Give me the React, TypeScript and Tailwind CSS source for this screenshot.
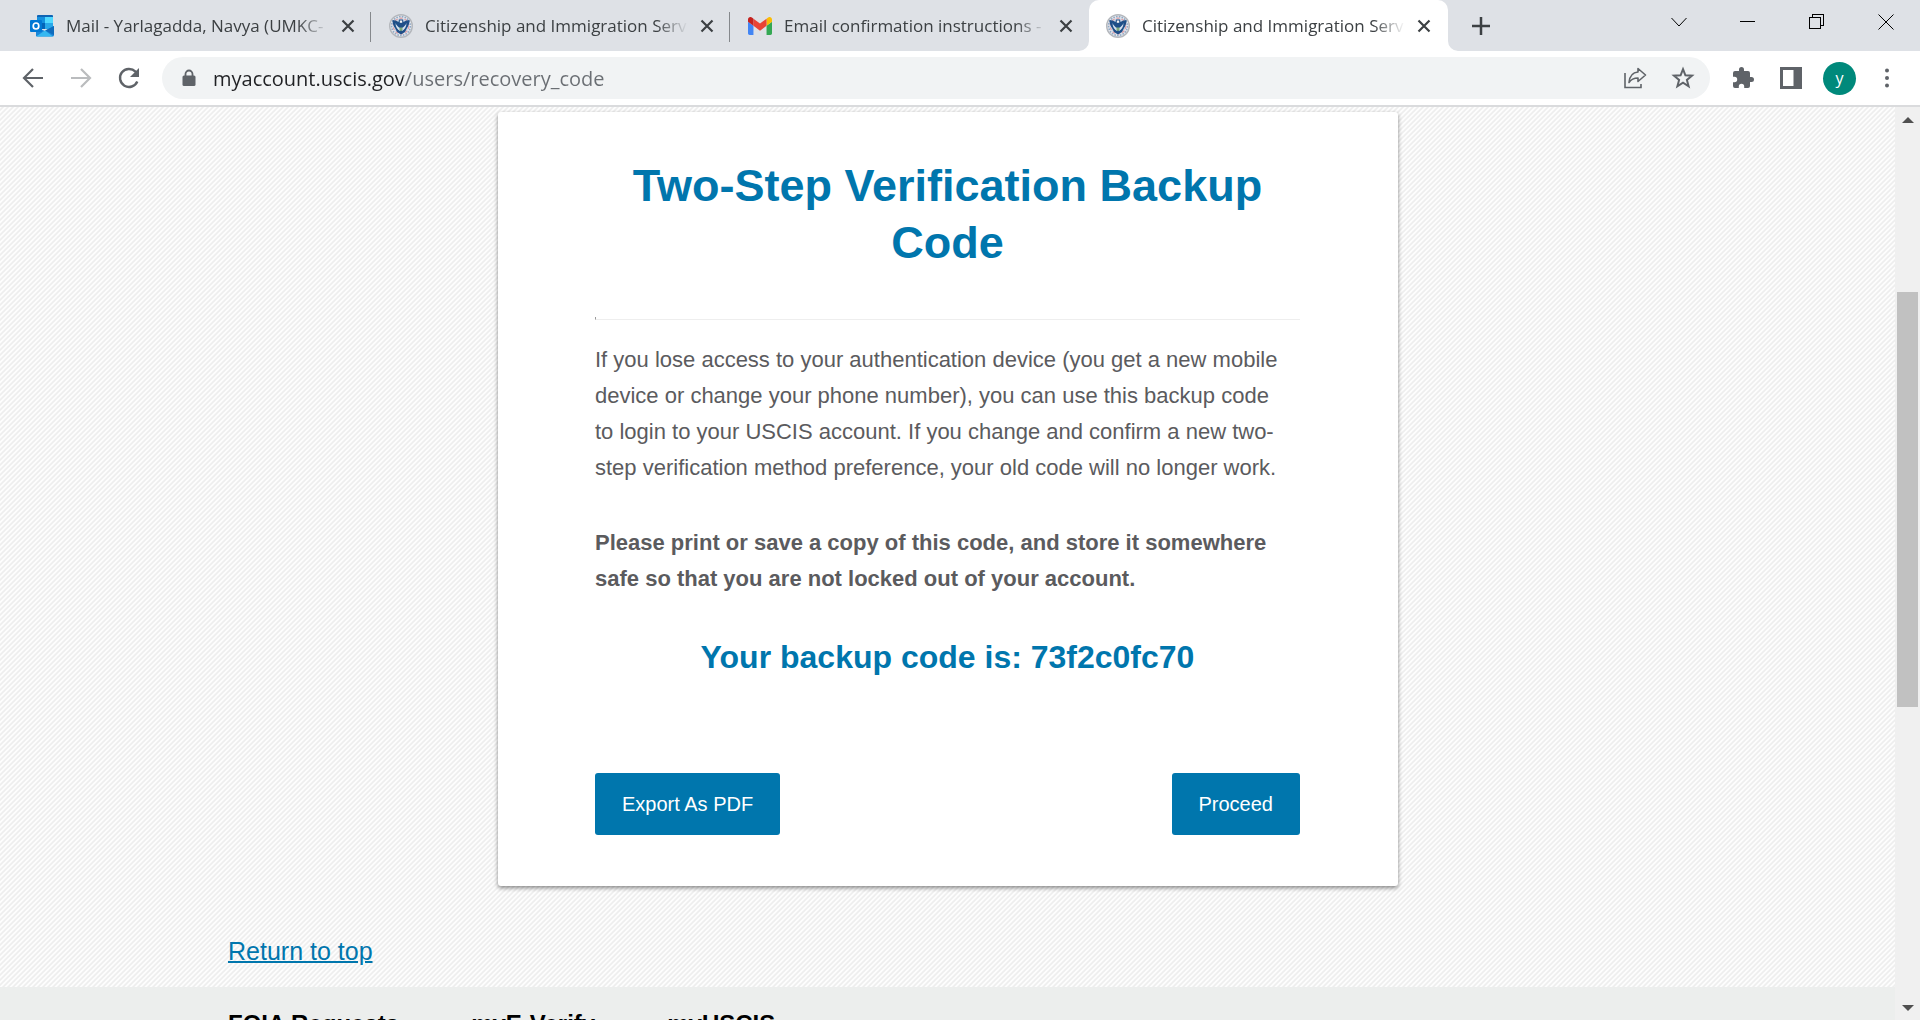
import type { ReactNode } from 'react';

function OutlookIcon() {
  return (
    <svg viewBox="0 0 24 22" className="h-[22px] w-6 shrink-0" aria-hidden="true">
      <rect x="7" y="0" width="16" height="14" rx="1" fill="#0f64b4" />
      <rect x="7" y="2" width="8" height="6" fill="#1490df" />
      <rect x="15" y="2" width="8" height="6" fill="#50d9ff" />
      <rect x="7" y="8" width="8" height="6" fill="#0364b8" />
      <rect x="15" y="8" width="8" height="6" fill="#28a8ea" />
      <path d="M6 21V12l9 4 9-5v9a1.500 1.500 0 0 1-1.500 1.500H7z" fill="#1a86d8" />
      <path d="M24 11v9l-9-4.500z" fill="#0f6cbd" />
      <path d="M6 21.500 15 15.500l8 6z" fill="#35b8f1" />
      <rect x="0" y="5" width="12" height="12" rx="1" fill="#0078d4" />
      <ellipse cx="6" cy="11" rx="2.800" ry="3" fill="none" stroke="#fff" strokeWidth="1.700" />
    </svg>
  );
}

function SealIcon() {
  return (
    <svg viewBox="0 0 24 24" className="h-6 w-6 shrink-0" aria-hidden="true">
      <circle cx="12" cy="12" r="11.300" fill="#e6e8ec" stroke="#b4b7bc" strokeWidth="1.400" />
      <circle cx="12" cy="12" r="9.400" fill="none" stroke="#8fa9c6" strokeWidth="1.600" strokeDasharray="1.600 1.200" />
      <circle cx="12" cy="12" r="7.800" fill="#c9d7e6" stroke="#e0a0a6" strokeWidth="1.200" strokeDasharray="3 2" />
      <path d="M3.500 6c2.300 0 4.300.8 6 2L10 5.500h4l.5 2.500c1.700-1.200 3.700-2 6-2 0 3.500-1 6-2.500 8l-2 4-4 2.500L8 18l-2-4C4.500 12 3.500 9.500 3.500 6z" fill="#1f4f88" />
      <path d="M6.500 9c1 2.500 2.800 4 4.500 5v3c-2.500-1.200-4.500-4-4.500-8zM17.500 9c-1 2.500-2.800 4-4.500 5v3c2.500-1.200 4.500-4 4.500-8z" fill="#d5e2ef" />
      <path d="M10.800 6.500h2.400v2.300h-2.400z" fill="#f4f4f4" />
      <path d="M10.500 13.500h3v2.500L12 17.300 10.500 16z" fill="#7fa97c" />
    </svg>
  );
}

function GmailIcon() {
  return (
    <svg viewBox="52 42 88 66" className="h-[18px] w-6 shrink-0" aria-hidden="true">
      <path fill="#4285f4" d="M58 108h14V74L52 59v43c0 3.320 2.690 6 6 6" />
      <path fill="#34a853" d="M120 108h14c3.320 0 6-2.690 6-6V59l-20 15" />
      <path fill="#fbbc04" d="M120 48v26l20-15v-8c0-7.420-8.470-11.650-14.400-7.200" />
      <path fill="#ea4335" d="M72 74V48l24 18 24-18v26L96 92" />
      <path fill="#c5221f" d="M52 51v8l20 15V48l-5.600-4.200c-5.940-4.450-14.400-.22-14.400 7.200" />
    </svg>
  );
}

function Tab({ icon, title, active, divider }: { icon: ReactNode; title: string; active?: boolean; divider?: boolean }) {
  return (
    <div className={active ? 'relative flex max-w-[359px] flex-1 items-center rounded-t-[10px] bg-white pr-[17px] pl-[17px]' : 'relative flex max-w-[359px] flex-1 items-center pr-4 pl-[18px]'}>
      {active && (
        <>
          <svg viewBox="0 0 10 10" className="absolute bottom-0 -left-[10px] size-[10px]" aria-hidden="true">
            <path d="M10 0v10H0A10 10 0 0 0 10 0z" fill="#fff" />
          </svg>
          <svg viewBox="0 0 10 10" className="absolute -right-[10px] bottom-0 size-[10px]" aria-hidden="true">
            <path d="M0 0v10h10A10 10 0 0 1 0 0z" fill="#fff" />
          </svg>
        </>
      )}
      {icon}
      <span className="ml-3 min-w-0 flex-1 mask-r-from-[calc(100%-32px)] text-[17px] leading-6 whitespace-nowrap text-[#3c4043]">
        {title}
      </span>
      <button aria-label="Close tab" className="ml-3 text-[#3c4043]">
        <svg viewBox="0 0 14 14" className="size-[14px]" fill="none" stroke="currentColor" strokeWidth="2.200">
          <path d="M1.500 1.500l11 11M12.500 1.500l-11 11" />
        </svg>
      </button>
      {divider && <span className="absolute top-3 right-0 h-[30px] w-px bg-[#85888c]" />}
    </div>
  );
}

function TabStrip() {
  return (
    <div className="flex h-[51px] shrink-0 bg-[#dee1e6] pl-3">
      <div className="flex min-w-0 flex-1">
        <Tab icon={<OutlookIcon />} title="Mail - Yarlagadda, Navya (UMKC-" divider />
        <Tab icon={<SealIcon />} title="Citizenship and Immigration Serv" divider />
        <Tab icon={<GmailIcon />} title="Email confirmation instructions -" />
        <Tab icon={<SealIcon />} title="Citizenship and Immigration Serv" active />
        <button aria-label="New tab" className="ml-6 self-center text-[#3c4043]">
          <svg viewBox="0 0 18 18" className="size-[18px]" fill="none" stroke="currentColor" strokeWidth="2.500">
            <path d="M9 0v18M0 9h18" />
          </svg>
        </button>
      </div>
      <div className="flex h-[43px] items-center gap-[53px] pr-[26px] text-black">
        <button aria-label="Search tabs">
          <svg viewBox="0 0 16 16" className="size-4" fill="none" stroke="currentColor" strokeWidth="1">
            <path d="M.5 4 8 12 15.500 4" />
          </svg>
        </button>
        <button aria-label="Minimize">
          <svg viewBox="0 0 16 16" className="size-4" stroke="currentColor" shapeRendering="crispEdges">
            <path d="M0 7.500h15" />
          </svg>
        </button>
        <button aria-label="Restore">
          <svg viewBox="0 0 16 16" className="size-4" fill="none" stroke="currentColor" shapeRendering="crispEdges">
            <path d="M.5 3.500h11v11H.5zM3.500 3.500v-3h11v11h-3" />
          </svg>
        </button>
        <button aria-label="Close window">
          <svg viewBox="0 0 16 16" className="size-4" fill="none" stroke="currentColor" strokeWidth="1">
            <path d="M.5.5l15 15M15.500.5l-15 15" />
          </svg>
        </button>
      </div>
    </div>
  );
}

function Toolbar() {
  return (
    <div className="flex h-14 shrink-0 items-center border-b-2 border-[#dadbdd] bg-white pr-[31px] pl-[21px] text-[#5f6368]">
      <button aria-label="Back">
        <svg viewBox="0 0 24 24" className="size-6" fill="none" stroke="currentColor" strokeWidth="2.200">
          <path d="M22 12H3.500M12 3 3 12l9 9" />
        </svg>
      </button>
      <button aria-label="Forward" className="ml-6 text-[#babcbe]">
        <svg viewBox="0 0 24 24" className="size-6" fill="none" stroke="currentColor" strokeWidth="2.200">
          <path d="M2 12h18.500M12 3l9 9-9 9" />
        </svg>
      </button>
      <button aria-label="Reload" className="ml-6">
        <svg viewBox="0 0 24 24" className="size-6" fill="none" stroke="currentColor" strokeWidth="2.400">
          <path d="M20.300 15.500A9 9 0 1 1 18.500 5.700L21 8" />
          <path d="M22 2v9h-9z" fill="currentColor" stroke="none" />
        </svg>
      </button>
      <div className="ml-[21px] flex h-[42px] flex-1 items-center rounded-full bg-[#f1f3f4] pr-[15px] pl-5">
        <svg viewBox="0 0 14 18" className="h-[18px] w-[14px]" aria-hidden="true">
          <path d="M3.500 7V5a3.500 3.500 0 0 1 7 0v2" fill="none" stroke="#5f6368" strokeWidth="1.800" />
          <rect x=".5" y="6.500" width="13" height="10.500" rx="1.500" fill="#5f6368" />
        </svg>
        <input
          aria-label="Address and search bar"
          defaultValue="myaccount.uscis.gov/users/recovery_code"
          className="ml-[17px] min-w-0 flex-1 bg-linear-[90deg,#202124_190px,#6a6e73_190px] bg-clip-text pt-0.5 text-[20px] leading-7 text-transparent outline-none"
        />
        <button aria-label="Share this page">
          <svg viewBox="0 0 24 24" className="size-6" fill="none" stroke="currentColor" strokeWidth="1.600">
            <path d="M2 7v14.500h16V18" />
            <path d="M15 2.500 22.500 9 15 15.500V12c-4 0-7 1.500-9 4.500C6.500 11 9.500 6.500 15 6z" strokeLinejoin="round" />
          </svg>
        </button>
        <button aria-label="Bookmark this tab" className="ml-6">
          <svg viewBox="0 0 24 24" className="size-6" fill="none" stroke="currentColor" strokeWidth="2">
            <path d="M12 3.200l2.400 6.100 6.600.4-5.100 4.200 1.700 6.400L12 16.700l-5.600 3.600 1.700-6.400L3 9.700l6.600-.4z" />
          </svg>
        </button>
      </div>
      <button aria-label="Extensions" className="ml-[21px]">
        <svg viewBox="0 0 24 24" className="size-6" fill="currentColor">
          <path d="M20.500 11H19V7a2 2 0 0 0-2-2h-4V3.500a2.500 2.500 0 0 0-5 0V5H4a2 2 0 0 0-2 2v3.800h1.500a2.700 2.700 0 0 1 0 5.400H2V20a2 2 0 0 0 2 2h3.800v-1.500a2.700 2.700 0 0 1 5.400 0V22H17a2 2 0 0 0 2-2v-4h1.500a2.500 2.500 0 0 0 0-5z" />
        </svg>
      </button>
      <button aria-label="Side panel" className="ml-6">
        <svg viewBox="0 0 24 24" className="size-6" fill="none">
          <rect x="2.500" y="2.500" width="19" height="19" stroke="currentColor" strokeWidth="3" />
          <rect x="14.500" y="2" width="7" height="20" fill="currentColor" />
        </svg>
      </button>
      <button aria-label="Profile" className="ml-5 size-[33px] rounded-full bg-[#00897b] text-[16px] leading-[29px] text-white">
        y
      </button>
      <button aria-label="Menu" className="ml-[29px]">
        <svg viewBox="0 0 4 20" className="h-5 w-1" fill="currentColor">
          <circle cx="2" cy="2.500" r="2" />
          <circle cx="2" cy="10" r="2" />
          <circle cx="2" cy="17.500" r="2" />
        </svg>
      </button>
    </div>
  );
}

function Scrollbar() {
  return (
    <div className="flex w-[25px] shrink-0 flex-col items-center bg-[#f0f0f0] pt-[10px] pb-[9px]">
      <svg viewBox="0 0 12 6" className="h-[6px] w-3" aria-hidden="true">
        <path d="M0 6 6 0l6 6z" fill="#505050" />
      </svg>
      <div className="mt-[169px] h-[415px] w-[21px] bg-[#c1c1c1]" />
      <svg viewBox="0 0 12 6" className="mt-auto h-[6px] w-3" aria-hidden="true">
        <path d="M0 0l6 6 6-6z" fill="#505050" />
      </svg>
    </div>
  );
}

export default function App() {
  return (
    <div className="flex h-screen flex-col overflow-hidden bg-white font-['Open_Sans',sans-serif]">
      <TabStrip />
      <Toolbar />
      <div className="flex min-h-0 flex-1">
        <div className="min-w-0 flex-1 overflow-hidden bg-[#fcfcfc] bg-[linear-gradient(135deg,#fdfdfd_12%,#eeeeee_25%,#eeeeee_37%,#fdfdfd_50%,#fdfdfd_62%,#eeeeee_75%,#eeeeee_87%,#fdfdfd_100%)] bg-size-[5px_5px] font-['Liberation_Sans',Arial,sans-serif]">
          <main className="mx-auto max-w-[1441px] pt-[5px] pb-[18px] pl-px">
            <section className="mx-auto max-w-[900px] rounded-[3px] bg-white pt-[45px] pr-[98px] pb-[51px] pl-[97px] shadow-[0_2px_4px_rgba(0,0,0,0.45)]">
              <h1 className="text-center text-[45px] leading-[57px] font-bold text-[#0076ad]">
                Two-Step Verification Backup Code
              </h1>
              <hr className="mt-[46px] h-[3px] border-t-0 border-b border-l border-b-[#eeeeee] border-l-[#9a9a9a]" />
              <p className="mt-[22px] pr-3 text-[22px] leading-9 text-[#5b5b5e]">
                If you lose access to your authentication device (you get a new mobile device or change your phone number), you can use this backup code to login to your USCIS account. If you change and confirm a new two-step verification method preference, your old code will no longer work.
              </p>
              <p className="mt-[39px] pr-3 text-[22px] leading-9 font-bold text-[#5b5b5e]">
                Please print or save a copy of this code, and store it somewhere safe so that you are not locked out of your account.
              </p>
              <h2 className="mt-10 text-center text-[32px] leading-10 font-bold text-[#0076ad]">
                Your backup code is: 73f2c0fc70
              </h2>
              <div className="mt-24 flex justify-between">
                <button className="h-[62px] rounded-[3px] bg-[#0076ad] px-[27px] text-[20px] text-white">Export As PDF</button>
                <button className="h-[62px] rounded-[3px] bg-[#0076ad] px-[27px] text-[20px] text-white">Proceed</button>
              </div>
            </section>
            <a href="#top" className="mt-[47px] inline-block text-[25px] leading-9 text-[#0076ad] underline decoration-2">
              Return to top
            </a>
          </main>
          <footer className="bg-[#eceeed]">
            <nav className="mx-auto flex max-w-[1441px] gap-[72px] pt-[23px] pb-10 pl-px text-[24px] leading-7 font-bold text-black">
              <a href="#foia">FOIA Requests</a>
              <a href="#everify">myE-Verify</a>
              <a href="#uscis">myUSCIS</a>
            </nav>
          </footer>
        </div>
        <Scrollbar />
      </div>
    </div>
  );
}
